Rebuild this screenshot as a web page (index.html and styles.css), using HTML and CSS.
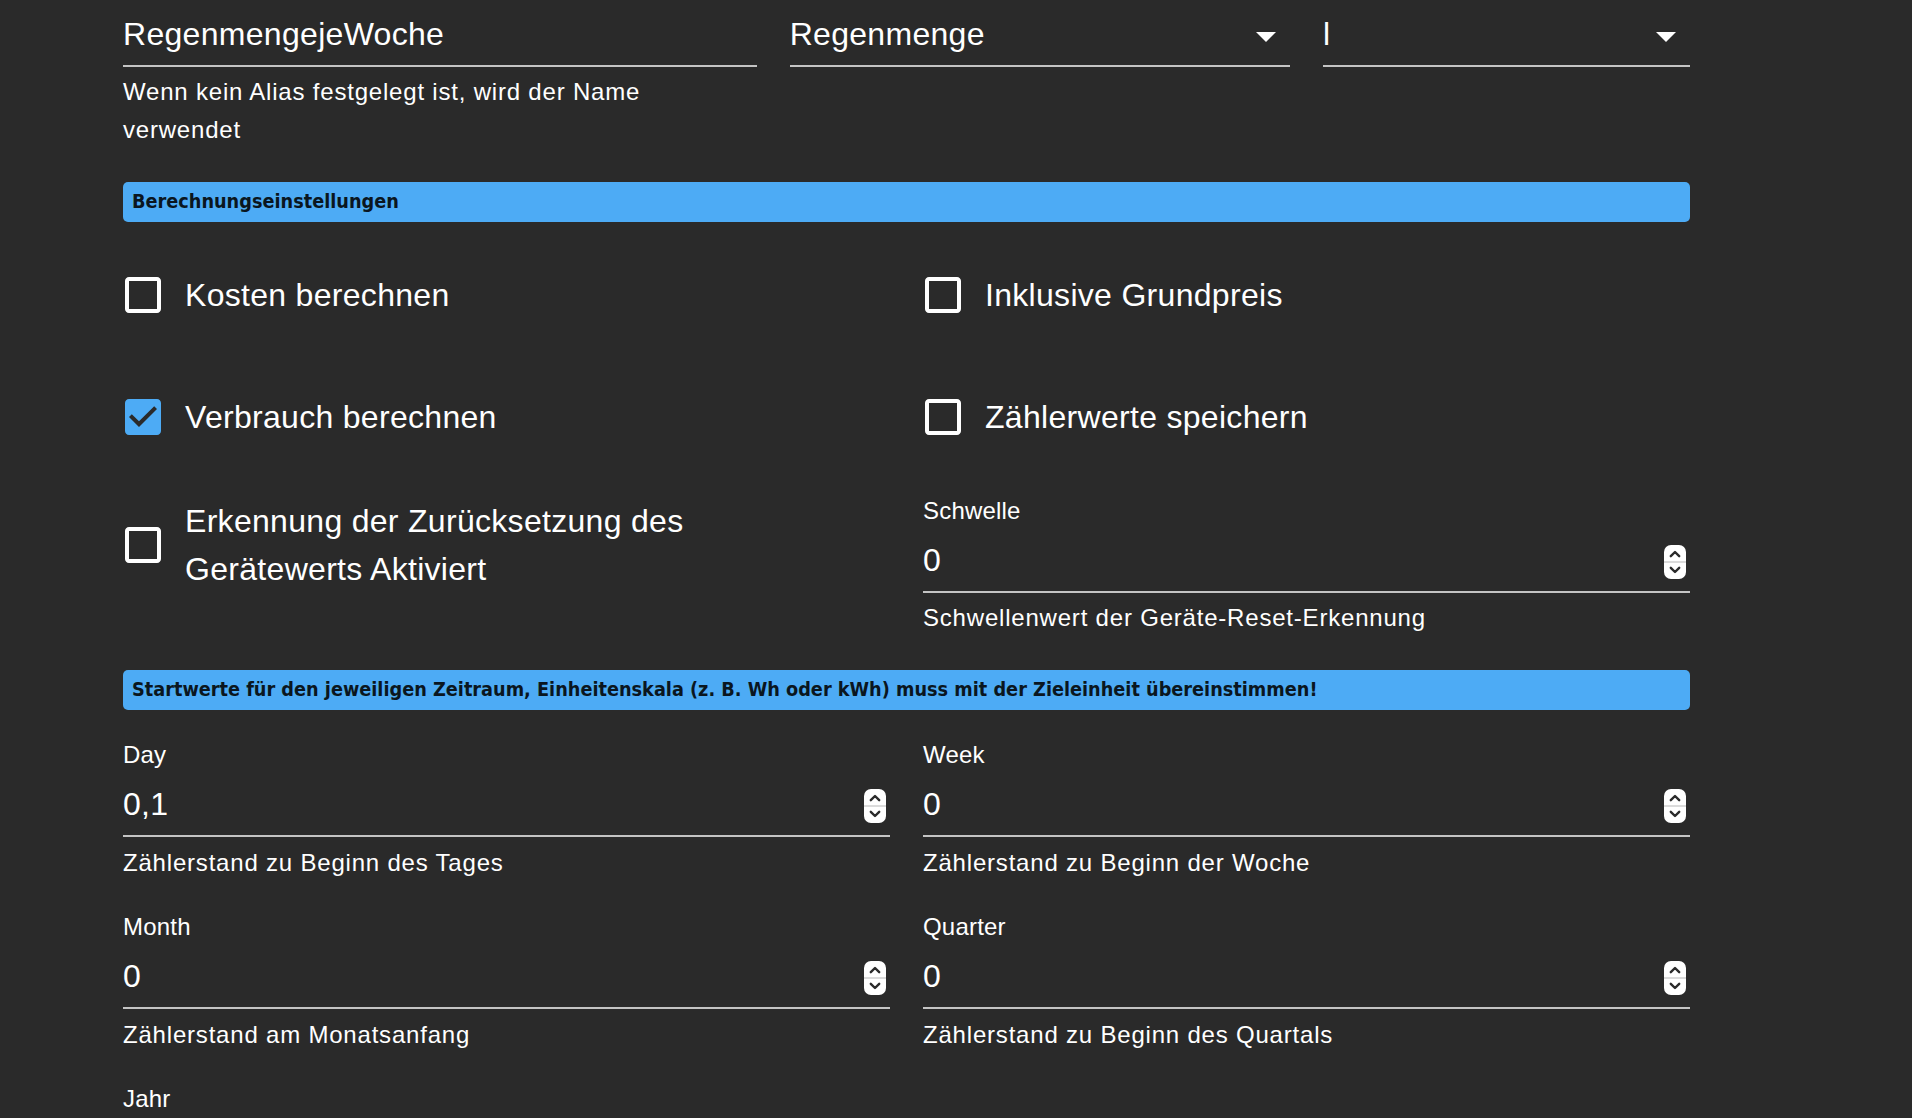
FILE: index.html
```html
<!DOCTYPE html>
<html lang="de">
<head>
<meta charset="utf-8">
<title>Einstellungen</title>
<link rel="stylesheet" href="styles.css">
</head>
<body>
<svg class="defs" width="0" height="0" aria-hidden="true">
  <defs>
    <symbol id="spin" viewBox="0 0 22 34">
      <rect x="0" y="0" width="22" height="34" rx="7" fill="#ffffff"/>
      <line x1="0" y1="17" x2="22" y2="17" stroke="#cfcfcf" stroke-width="1.5"/>
      <path d="M6.8 11.2 L11 7 L15.2 11.2" fill="none" stroke="#2b2b2b" stroke-width="2.4" stroke-linecap="round" stroke-linejoin="round"/>
      <path d="M6.8 22.8 L11 27 L15.2 22.8" fill="none" stroke="#2b2b2b" stroke-width="2.4" stroke-linecap="round" stroke-linejoin="round"/>
    </symbol>
    <symbol id="blank" viewBox="0 0 24 24">
      <path d="M19 5v14H5V5h14m0-2H5c-1.11 0-2 .9-2 2v14c0 1.1.89 2 2 2h14c1.1 0 2-.9 2-2V5c0-1.1-.9-2-2-2z"/>
    </symbol>
    <symbol id="checked" viewBox="0 0 24 24">
      <path d="M19 3H5c-1.11 0-2 .9-2 2v14c0 1.1.89 2 2 2h14c1.11 0 2-.9 2-2V5c0-1.1-.89-2-2-2zm-9 14l-5-5 1.41-1.41L10 14.17l7.590-7.59L19 8l-9 9z"/>
    </symbol>
    <symbol id="drop" viewBox="0 0 24 24">
      <path d="M7 10l5 5 5-5z"/>
    </symbol>
  </defs>
</svg>

<div class="page">
  <div class="grid top-row">
    <div class="field span5">
      <div class="input"><span class="value">RegenmengejeWoche</span></div>
      <p class="helper">Wenn kein Alias festgelegt ist, wird der Name<br>verwendet</p>
    </div>
    <div class="field span4">
      <div class="input"><span class="value">Regenmenge</span><svg class="drop"><use href="#drop"/></svg></div>
    </div>
    <div class="field span3">
      <div class="input"><span class="value">l</span><svg class="drop"><use href="#drop"/></svg></div>
    </div>
  </div>

  <div class="banner first">Berechnungseinstellungen</div>

  <div class="grid checks">
    <label class="check span6"><span class="box"><svg class="icon"><use href="#blank"/></svg></span><span class="text">Kosten berechnen</span></label>
    <label class="check span6"><span class="box"><svg class="icon"><use href="#blank"/></svg></span><span class="text">Inklusive Grundpreis</span></label>
    <label class="check span6"><span class="box on"><svg class="icon"><use href="#checked"/></svg></span><span class="text">Verbrauch berechnen</span></label>
    <label class="check span6"><span class="box"><svg class="icon"><use href="#blank"/></svg></span><span class="text">Zählerwerte speichern</span></label>
    <label class="check span6"><span class="box"><svg class="icon"><use href="#blank"/></svg></span><span class="text">Erkennung der Zurücksetzung des<br>Gerätewerts Aktiviert</span></label>
    <div class="field span6">
      <div class="flabel">Schwelle</div>
      <div class="input"><span class="value">0</span><svg class="spin"><use href="#spin"/></svg></div>
      <p class="helper">Schwellenwert der Geräte-Reset-Erkennung</p>
    </div>
  </div>

  <div class="banner second">Startwerte für den jeweiligen Zeitraum, Einheitenskala (z. B. Wh oder kWh) muss mit der Zieleinheit übereinstimmen!</div>

  <div class="grid values">
    <div class="field span6">
      <div class="flabel">Day</div>
      <div class="input"><span class="value">0,1</span><svg class="spin"><use href="#spin"/></svg></div>
      <p class="helper">Zählerstand zu Beginn des Tages</p>
    </div>
    <div class="field span6">
      <div class="flabel">Week</div>
      <div class="input"><span class="value">0</span><svg class="spin"><use href="#spin"/></svg></div>
      <p class="helper">Zählerstand zu Beginn der Woche</p>
    </div>
    <div class="field span6">
      <div class="flabel">Month</div>
      <div class="input"><span class="value">0</span><svg class="spin"><use href="#spin"/></svg></div>
      <p class="helper">Zählerstand am Monatsanfang</p>
    </div>
    <div class="field span6">
      <div class="flabel">Quarter</div>
      <div class="input"><span class="value">0</span><svg class="spin"><use href="#spin"/></svg></div>
      <p class="helper">Zählerstand zu Beginn des Quartals</p>
    </div>
    <div class="field span6">
      <div class="flabel">Jahr</div>
    </div>
  </div>
</div>
</body>
</html>
```

FILE: styles.css
```css
html, body {
  margin: 0;
  padding: 0;
}

body {
  background: #2a2a2a;
  color: #ffffff;
  font-family: "Liberation Sans", Arial, Helvetica, sans-serif;
  height: 1118px;
  overflow: hidden;
}

.defs {
  position: absolute;
  width: 0;
  height: 0;
}

.page {
  width: 1567px;
  margin-left: 123px;
  padding-top: 3px;
}

.grid {
  display: grid;
  grid-template-columns: repeat(12, 1fr);
  column-gap: 33px;
  align-items: start;
}

.span3 { grid-column: span 3; }
.span4 { grid-column: span 4; }
.span5 { grid-column: span 5; }
.span6 { grid-column: span 6; }

.field {
  min-width: 0;
}

.flabel {
  font-size: 24px;
  line-height: 28px;
  height: 32px;
  letter-spacing: 0.2px;
  color: #ffffff;
}

.input {
  display: flex;
  align-items: center;
  height: 64px;
  box-sizing: border-box;
  padding: 8px 0;
  border-bottom: 2px solid #c4c4c4;
  font-size: 32px;
  line-height: 46px;
  letter-spacing: 0.3px;
}

.value {
  flex: 1;
  white-space: nowrap;
}

.drop {
  width: 48px;
  height: 48px;
  fill: #ffffff;
  margin-top: 4px;
  flex: none;
}

.spin {
  width: 22px;
  height: 34px;
  margin-right: 4px;
  margin-top: 4px;
  flex: none;
}

.helper {
  margin: 6px 0 0;
  font-size: 24px;
  line-height: 38px;
  letter-spacing: 0.8px;
  color: #ffffff;
}

.values .helper {
  line-height: 40px;
}

.banner {
  height: 40px;
  box-sizing: border-box;
  border-radius: 5px;
  background: #4dabf5;
  color: #0a1620;
  padding-left: 9px;
  font-family: "DejaVu Sans Condensed", "DejaVu Sans", Verdana, sans-serif;
  font-stretch: condensed;
  font-weight: bold;
  font-size: 19.7px;
  line-height: 40px;
  white-space: nowrap;
}

.banner.first {
  margin-top: 33px;
}

.banner.second {
  margin-top: 33px;
}

.checks {
  margin-top: 31px;
  row-gap: 38px;
}

.check {
  display: flex;
  align-items: center;
  margin-left: -22px;
  cursor: pointer;
}

.box {
  padding: 18px;
  width: 48px;
  height: 48px;
  flex: none;
}

.icon {
  width: 48px;
  height: 48px;
  fill: #ffffff;
  display: block;
}

.box.on .icon {
  fill: #4dabf5;
}

.text {
  font-size: 32px;
  line-height: 48px;
  letter-spacing: 0.3px;
}

.values {
  margin-top: 31px;
  row-gap: 30px;
}
```
